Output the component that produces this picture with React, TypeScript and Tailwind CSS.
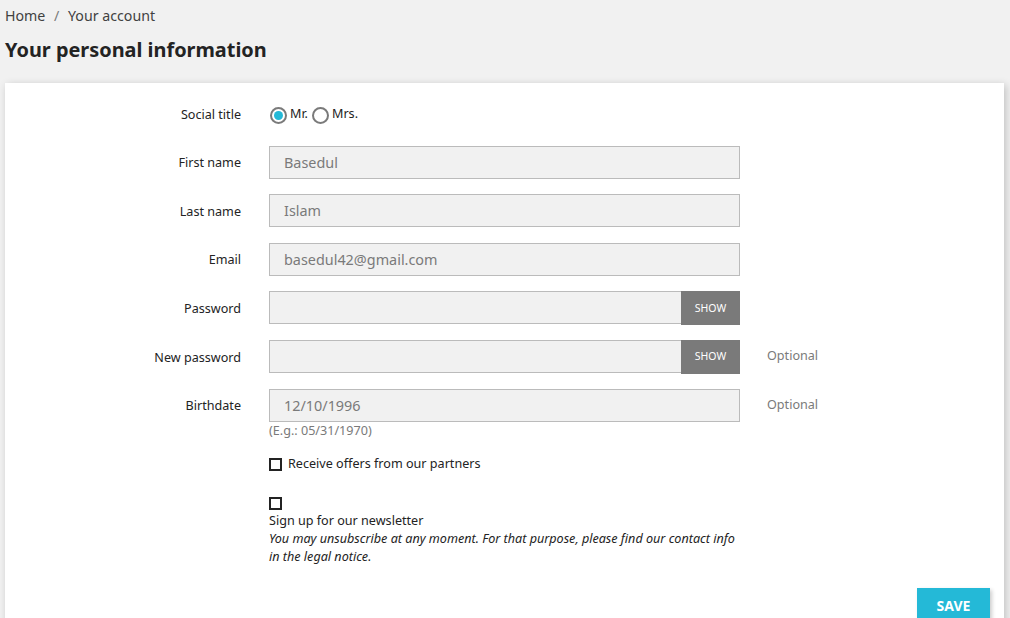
import React from 'react';

const font = { fontFamily: '"Noto Sans", "Open Sans", sans-serif' };

const Row = ({
  label,
  children,
  note,
  last,
}: {
  label: string;
  children: React.ReactNode;
  note?: string;
  last?: boolean;
}) => (
  <div className={last ? 'flex items-center h-[33px]' : 'flex items-center h-[33px] mb-[15.6px]'}>
    <label className="w-[236px] mt-[3px] text-right text-[12.6px] text-[#232323]">{label}</label>
    <div className="ml-[28px] w-[471px] flex">{children}</div>
    {note && <span className="ml-[27px] text-[12.6px] text-[#7a7a7a]">{note}</span>}
  </div>
);

const TextInput = ({ value }: { value?: string }) => (
  <input
    readOnly
    defaultValue={value}
    className="w-full h-[33px] bg-[#f1f1f1] border border-[#bbbbbb] px-[14px] text-[14.4px] text-[#7a7a7a] outline-none"
  />
);

const PasswordInput = () => (
  <div className="flex w-full h-[33px]">
    <input readOnly className="flex-1 h-[33px] bg-[#f1f1f1] border border-[#bbbbbb] outline-none" />
    <button className="w-[59px] h-[34px] -ml-px bg-[#7a7a7a] text-white text-[10.5px]">SHOW</button>
  </div>
);

const App = () => {
  return (
    <div className="min-h-[618px] bg-[#f1f1f1] text-[#232323] overflow-hidden" style={font}>
      <nav className="pl-[5px] pt-[6px] h-[32px] text-[14.2px] text-[#414141] leading-[20px]">
        Home <span className="mx-[5px] text-[#7a7a7a]">/</span> Your account
      </nav>
      <h1 className="pl-[5px] text-[19.9px] font-bold leading-[32px] mt-[2px] text-[#232323]">
        Your personal information
      </h1>
      <div className="ml-[5px] mt-[17px] w-[999px] bg-white shadow-[2px_2px_8px_0_rgba(0,0,0,0.2)] pt-[14px] pb-[20px]">
        <Row label="Social title">
          <div className="flex items-center text-[12.6px] text-[#232323] mt-[3px]">
            <span className="ml-px w-[17px] h-[17px] rounded-full border-2 border-[#7a7a7a] flex items-center justify-center">
              <span className="w-[9px] h-[9px] rounded-full bg-[#24b9d7]" />
            </span>
            <span className="ml-[3px] -mt-[2px]">Mr.</span>
            <span className="ml-[4px] w-[17px] h-[17px] rounded-full border-2 border-[#7a7a7a]" />
            <span className="ml-[3px] -mt-[2px]">Mrs.</span>
          </div>
        </Row>
        <Row label="First name">
          <TextInput value="Basedul" />
        </Row>
        <Row label="Last name">
          <TextInput value="Islam" />
        </Row>
        <Row label="Email">
          <TextInput value="basedul42@gmail.com" />
        </Row>
        <Row label="Password">
          <PasswordInput />
        </Row>
        <Row label="New password" note="Optional">
          <PasswordInput />
        </Row>
        <Row label="Birthdate" note="Optional" last>
          <TextInput value="12/10/1996" />
        </Row>
        <div className="ml-[264px] text-[12.6px] text-[#7a7a7a] leading-[16px] mt-[1px]">(E.g.: 05/31/1970)</div>
        <div className="ml-[264px] mt-[16px] flex items-center text-[12.6px]">
          <span className="w-[13px] h-[13px] border-2 border-[#232323]" />
          <span className="ml-[6px]">Receive offers from our partners</span>
        </div>
        <div className="ml-[264px] mt-[24px] w-[471px] text-[12.6px] leading-[18px]">
          <span className="block w-[13px] h-[13px] border-2 border-[#232323]" />
          <div className="mt-[2px]">Sign up for our newsletter</div>
          <div className="italic">
            You may unsubscribe at any moment. For that purpose, please find our contact info in the legal notice.
          </div>
        </div>
        <div className="flex justify-end pr-[14px] mt-[22px]">
          <button className="w-[73px] h-[34px] bg-[#24b9d7] text-white font-bold text-[14px] shadow-[2px_2px_4px_0_rgba(0,0,0,0.2)]">
            SAVE
          </button>
        </div>
      </div>
    </div>
  );
};

export default App;
